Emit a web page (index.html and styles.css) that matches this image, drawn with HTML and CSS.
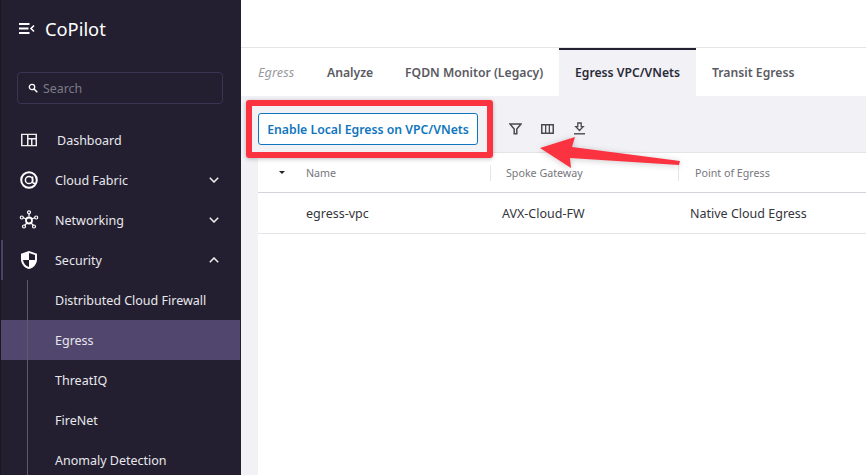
FILE: index.html
```html
<!DOCTYPE html>
<html lang="en">
<head>
<meta charset="utf-8">
<title>CoPilot</title>
<link rel="stylesheet" href="styles.css">
</head>
<body>
<div class="app">
  <aside class="sidebar">
    <div class="brand">
      <svg class="brand-icon" width="16" height="11" viewBox="0 0 16 11"><path d="M0 1h10.500M0 5.500h9.500M0 10h10.500" stroke="#fff" stroke-width="1.800" fill="none"/><path d="M15 2.500 12 5.500 15 8.500" stroke="#fff" stroke-width="1.600" fill="none"/></svg>
      <span class="brand-name">CoPilot</span>
    </div>
    <div class="search">
      <svg width="10" height="10" viewBox="0 0 10 10"><circle cx="4" cy="4" r="2.700" stroke="#fff" stroke-width="1.300" fill="none"/><path d="M6 6l3.300 3.300" stroke="#fff" stroke-width="1.500"/></svg>
      <span>Search</span>
    </div>
    <nav class="nav">
      <div class="item item-dash">
        <svg class="ico" width="16" height="13" viewBox="0 0 16 13"><path fill="#eee" fill-rule="evenodd" d="M0 0h16v13H0zM1.500 1.500v10H6v-10zM7.500 1.500V4.500h7v-3zM7.500 6v5.500H10V6zM11.500 6v5.500h3V6z"/></svg>
        <span class="label">Dashboard</span>
      </div>
      <div class="item">
        <svg class="ico" width="18" height="18" viewBox="0 0 18 18"><circle cx="9" cy="9" r="7.800" stroke="#fff" stroke-width="2" fill="none"/><circle cx="9" cy="9" r="3.600" stroke="#fff" stroke-width="1.500" fill="none"/><path d="M12.600 5.500v5q0 2.200 2.400 1.700" stroke="#fff" stroke-width="1.500" fill="none"/></svg>
        <span class="label">Cloud Fabric</span>
        <svg class="chev" width="10" height="6" viewBox="0 0 10 6"><path d="M.8.800 5 5 9.200.800" stroke="#f2f2f2" stroke-width="1.500" fill="none"/></svg>
      </div>
      <div class="item">
        <svg class="ico" width="20" height="20" viewBox="0 0 20 20"><g stroke="#fff" stroke-width="1.200" fill="none"><path d="M10 3.500v3M4.200 7.800l3.200 1.200M15.800 7.800l-3.200 1.200M5.500 15.500l2.500-2.500M14.500 15.500l-2.500-2.500"/><circle cx="10" cy="2.300" r="1.500"/><circle cx="2.800" cy="7.500" r="1.500"/><circle cx="17.200" cy="7.500" r="1.500"/><circle cx="5" cy="16.500" r="1.500"/><circle cx="15" cy="16.500" r="1.500"/><circle cx="10" cy="10.500" r="3" stroke-width="1.800"/></g></svg>
        <span class="label">Networking</span>
        <svg class="chev" width="10" height="6" viewBox="0 0 10 6"><path d="M.8.800 5 5 9.200.800" stroke="#f2f2f2" stroke-width="1.500" fill="none"/></svg>
      </div>
      <div class="item item-open">
        <svg class="ico" width="16" height="18" viewBox="0 0 16 18"><path fill="#fff" d="M8 0 0 2.700v5.500C0 12.800 3.300 16.800 8 18c4.700-1.200 8-5.200 8-9.800V2.700z"/><path fill="#231f30" d="M8 2.100 14 4.100v4.800H8zM8 8.900v7.100C4.800 15 2.400 12.200 2 8.900z"/></svg>
        <span class="label">Security</span>
        <svg class="chev" width="10" height="6" viewBox="0 0 10 6"><path d="M.8 5.200 5 1 9.200 5.200" stroke="#f2f2f2" stroke-width="1.500" fill="none"/></svg>
      </div>
      <div class="sub">
        <div class="item"><span class="label">Distributed Cloud Firewall</span></div>
        <div class="item active"><span class="label">Egress</span></div>
        <div class="item"><span class="label">ThreatIQ</span></div>
        <div class="item"><span class="label">FireNet</span></div>
        <div class="item"><span class="label">Anomaly Detection</span></div>
      </div>
    </nav>
  </aside>
  <main class="main">
    <div class="topbar"></div>
    <div class="tabs">
      <span class="tabs-title">Egress</span>
      <span class="tab tab-analyze">Analyze</span>
      <span class="tab tab-fqdn">FQDN Monitor (Legacy)</span>
      <span class="tab tab-active">Egress VPC/VNets</span>
      <span class="tab tab-transit">Transit Egress</span>
    </div>
    <div class="content">
      <div class="toolbar">
        <button class="btn">Enable Local Egress on VPC/VNets</button>
        <div class="tools">
          <svg width="13" height="12" viewBox="0 0 13 12"><path d="M1 1h11L7.800 6v4.800H5.200V6z" stroke="#4a4a4f" stroke-width="1.500" fill="none"/></svg>
          <svg class="tool-cols" width="13" height="10" viewBox="0 0 13 10"><path fill-rule="evenodd" fill="#4a4a4f" d="M0 0h13v10H0zM1.500 1.500v7h2.500v-7zM5.300 1.500v7h2.400v-7zM9 1.500v7h2.500v-7z"/></svg>
          <svg width="11" height="13" viewBox="0 0 11 13"><path d="M3.800 1h3.400v3.700h2L5.500 8.500 1.800 4.700h2z" stroke="#4a4a4f" stroke-width="1.300" fill="none"/><path d="M0 11.800h11" stroke="#4a4a4f" stroke-width="1.400"/></svg>
        </div>
      </div>
      <div class="table">
        <div class="row head">
          <div class="cell c-caret"><i class="caret"></i></div>
          <div class="cell c-name">Name</div>
          <div class="cell c-gw">Spoke Gateway</div>
          <div class="cell c-poe">Point of Egress</div>
        </div>
        <div class="row body">
          <div class="cell c-caret"></div>
          <div class="cell c-name">egress-vpc</div>
          <div class="cell c-gw">AVX-Cloud-FW</div>
          <div class="cell c-poe">Native Cloud Egress</div>
        </div>
      </div>
    </div>
    <div class="callout"></div>
    <svg class="arrow" width="160" height="60" viewBox="0 0 160 60"><path fill="#fb3240" d="M1 14 36 3 33 13 141 27 140 31 31 24 32 34z"/></svg>
  </main>
</div>
</body>
</html>
```
FILE: styles.css
```css
* { box-sizing: border-box; }
html, body { margin: 0; height: 100%; }
body { overflow: hidden; background: #fff; font-family: "Noto Sans", "Open Sans", sans-serif; font-size: 12px; }
.app { display: flex; width: 866px; height: 475px; }
.sidebar { width: 241px; flex: none; background: #231f30; color: #ececf0; overflow: hidden; box-shadow: inset 1px 0 0 #1a1a1e; }
.brand { display: flex; align-items: center; height: 56px; padding-left: 19px; gap: 10px; }
.brand-name { font-size: 18.3px; color: #fff; }
.search { display: flex; align-items: center; gap: 5px; height: 32px; margin: 16px 18px 0 17px; padding-left: 10px; border: 1px solid #3b3552; border-radius: 4px; color: #7d7a88; font-size: 12.4px; }
.nav { margin-top: 16px; }
.item { position: relative; display: flex; align-items: center; height: 40px; font-size: 12.5px; color: #e8e7ec; }
.ico { position: absolute; left: 29px; top: 50%; transform: translate(-50%, -50%); }
.label { margin-left: 55px; }
.item-dash .label { margin-left: 57px; }
.chev { position: absolute; left: 209px; top: 17px; }
.item-open::before { content: ""; position: absolute; left: 1px; top: 0; bottom: 0; width: 2px; background: #4a4268; }
.sub { position: relative; }
.sub::before { content: ""; position: absolute; left: 27px; top: 0; bottom: 0; width: 1px; background: #5d5a66; z-index: 1; }
.active { background: #51466e; margin-left: 1px; margin-right: 1px; }
.active .label { margin-left: 54px; }
.main { position: relative; flex: 1; display: flex; flex-direction: column; min-width: 0; }
.topbar { height: 48px; flex: none; border-bottom: 1px solid #e4e4e8; }
.tabs { display: flex; height: 48px; flex: none; align-items: stretch; font-size: 12.2px; font-weight: 600; color: #5a5a62; }
.tabs-title { width: 86px; padding-left: 17px; line-height: 49px; font-size: 12.8px; font-weight: 400; font-style: italic; color: #9a9aa0; }
.tab { line-height: 49px; }
.tab-analyze { width: 78px; }
.tab-fqdn { width: 154px; }
.tab-active { width: 137px; text-align: center; background: #f1f1f6; border-top: 2px solid #231f30; line-height: 45px; color: #2a2a38; }
.tab-transit { margin-left: 16px; }
.content { flex: 1; background: #f1f1f6; padding-left: 17px; display: flex; flex-direction: column; }
.toolbar { display: flex; align-items: center; height: 56px; flex: none; padding-top: 10px; }
.btn { width: 220px; height: 32px; padding: 0; background: #fff; border: 1px solid #0f76bd; border-radius: 3px; color: #0f76bd; font: 600 12.25px "Noto Sans", sans-serif; }
.tools { display: flex; align-items: center; gap: 19px; margin-left: 31px; margin-top: -1px; }
.tool-cols { margin-right: 1px; }
.table { flex: 1; background: #fff; border-top: 1px solid #e4e4e8; }
.row { display: flex; align-items: center; }
.head { height: 40px; border-bottom: 1px solid #d4d4da; color: #77777e; font-size: 10.7px; }
.body { height: 41px; border-bottom: 1px solid #e4e4e8; color: #35353c; font-size: 12.5px; }
.cell { flex: none; }
.c-caret { width: 48px; display: flex; padding-left: 21px; }
.caret { width: 0; height: 0; border: 3.500px solid transparent; border-top: 3.500px solid #222; border-bottom-width: 0; }
.c-name { width: 196px; }
.c-gw { width: 188px; }
.head .c-name { width: 184px; }
.head .c-gw { position: relative; width: 188px; padding-left: 16px; }
.head .c-poe { position: relative; padding-left: 17px; }
.head .c-gw::before, .head .c-poe::before { content: ""; position: absolute; left: 0; top: -1px; width: 1px; height: 16px; background: #e6e6ea; }
.c-poe { flex: 1; }
.callout { position: absolute; left: 5px; top: 100px; width: 247px; height: 58px; border: 6px solid #fb3240; border-radius: 3px; box-shadow: 0 1px 4px rgba(0,0,0,.25); }
.arrow { position: absolute; left: 298px; top: 134px; filter: drop-shadow(0 1px 3px rgba(0,0,0,.2)); }
```
